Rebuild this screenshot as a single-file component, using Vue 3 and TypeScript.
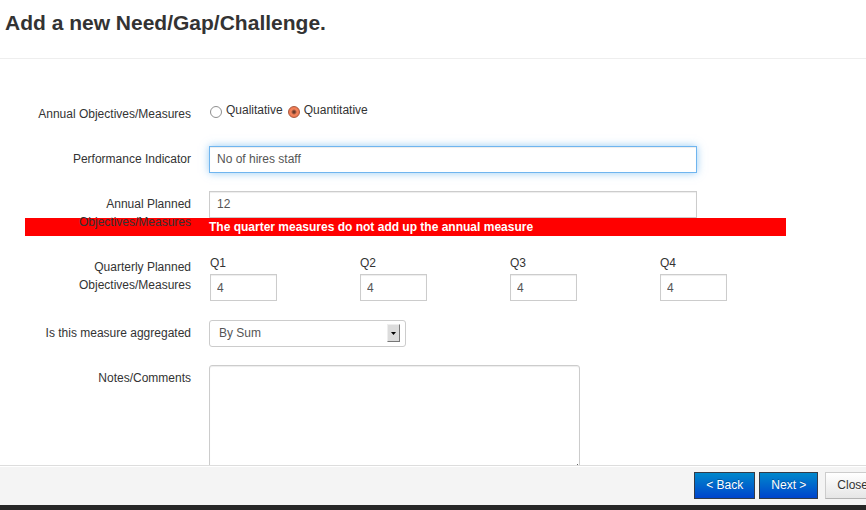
<script setup lang="ts">
import { reactive, ref } from 'vue'

interface Quarter {
  id: string
  label: string
  value: string
}

const kind = ref<'qualitative' | 'quantitative'>('quantitative')
const indicator = ref('No of hires staff')
const annual = ref('12')
const aggregation = ref('sum')
const notes = ref('')
const quarters = reactive<Quarter[]>([
  { id: 'q1', label: 'Q1', value: '4' },
  { id: 'q2', label: 'Q2', value: '4' },
  { id: 'q3', label: 'Q3', value: '4' },
  { id: 'q4', label: 'Q4', value: '4' },
])
</script>

<template>
  <div class="dialog">
    <header class="dialog-header">
      <h1>Add a new Need/Gap/Challenge.</h1>
    </header>

    <main class="dialog-body">
      <form id="need-form" class="form" @submit.prevent>
        <div class="row" role="radiogroup" aria-labelledby="kind-label">
          <span id="kind-label" class="label">Annual Objectives/Measures</span>
          <div class="radios">
            <input id="qualitative" v-model="kind" type="radio" name="kind" value="qualitative" />
            <label for="qualitative">Qualitative</label>
            <input id="quantitative" v-model="kind" type="radio" name="kind" value="quantitative" />
            <label for="quantitative">Quantitative</label>
          </div>
        </div>

        <div class="row">
          <label class="label" for="indicator">Performance Indicator</label>
          <input id="indicator" v-model="indicator" class="field wide active" type="text" />
        </div>

        <div class="group">
          <div class="row">
            <label class="label overhang" for="annual">Annual Planned Objectives/Measures</label>
            <input id="annual" v-model="annual" class="field wide" type="text" />
          </div>
          <p class="error" role="alert">The quarter measures do not add up the annual measure</p>
        </div>

        <div class="row">
          <span class="label">Quarterly Planned Objectives/Measures</span>
          <div class="quarters">
            <div v-for="q in quarters" :key="q.id" class="quarter">
              <label :for="q.id">{{ q.label }}</label>
              <input :id="q.id" v-model="q.value" class="field" type="text" />
            </div>
          </div>
        </div>

        <div class="row">
          <label class="label" for="aggregation">Is this measure aggregated</label>
          <div class="select">
            <select id="aggregation" v-model="aggregation">
              <option value="sum">By Sum</option>
            </select>
            <span class="arrow" aria-hidden="true">
              <svg width="5" height="3" viewBox="0 0 5 3"><path d="M0 0h5L2.5 3z" fill="#000" /></svg>
            </span>
          </div>
        </div>

        <div class="row">
          <label class="label" for="notes">Notes/Comments</label>
          <textarea id="notes" v-model="notes"></textarea>
        </div>
      </form>
    </main>

    <footer class="dialog-footer">
      <button class="btn primary" type="button">&lt; Back</button>
      <button class="btn primary" type="button">Next &gt;</button>
      <button class="btn close" type="button">Close</button>
    </footer>
  </div>
</template>

<style>
body {
  overflow: hidden;
  background: #fff;
}
</style>

<style scoped>
.dialog,
.dialog * {
  box-sizing: border-box;
}

.dialog {
  display: flex;
  flex-direction: column;
  height: 100vh;
  overflow: hidden;
  border-bottom: 5px solid #272727;
  color: #333;
  font: 12px/18px "Liberation Sans", Arial, sans-serif;
}

.dialog-header {
  flex: none;
  padding: 9px 5px 22px;
  border-bottom: 1px solid #eee;
}

h1 {
  margin: 0;
  font-size: 21px;
  line-height: 27px;
}

.dialog-body {
  flex: 1;
  min-height: 0;
  overflow: hidden;
  padding: 42px 80px 0 25px;
}

.form {
  display: flex;
  flex-direction: column;
  gap: 18px;
}

.row {
  display: grid;
  grid-template-columns: 166px 1fr;
  column-gap: 18px;
  align-items: start;
  min-height: 27px;
}

.label {
  padding-top: 4px;
  text-align: right;
}

.overhang {
  position: relative;
  z-index: 1;
  height: 27px;
}

.radios {
  display: flex;
  align-items: center;
  gap: 4px;
  height: 18px;
}

.radios input {
  appearance: none;
  flex: none;
  width: 12px;
  height: 12px;
  margin: 4px 0 0 1px;
  border: 1px solid #8f8f8f;
  border-radius: 50%;
  background: #fff;
}

.radios input:checked {
  border-color: #a8583e;
  background: radial-gradient(circle, #6b3a2a 0 1px, #f4845c 3px, #ee7850 5px);
}

.field {
  width: 100%;
  height: 27px;
  margin: 0;
  padding: 3px 7px 5px;
  border: 1px solid #ccc;
  border-radius: 0;
  background: #fff;
  box-shadow: inset 0 1px 1px rgba(0, 0, 0, 0.075);
  color: #555;
  font: inherit;
}

.wide {
  max-width: 488px;
}

.active,
.field:focus {
  border-color: #6fb5ef;
  outline: 0;
  box-shadow: inset 0 1px 1px rgba(0, 0, 0, 0.075), 0 0 8px rgba(82, 168, 236, 0.6);
}

.error {
  margin: 0;
  padding-left: 184px;
  background: #f00;
  color: #fff;
  font-weight: bold;
}

.quarters {
  display: grid;
  grid-template-columns: repeat(4, 150px);
  padding: 0 0 1px 1px;
}

.quarter {
  display: flex;
  flex-direction: column;
  gap: 2px;
}

.quarter .field {
  width: 67px;
  padding: 4px 6px;
}

.select {
  position: relative;
  width: 197px;
}

select {
  appearance: none;
  display: block;
  width: 100%;
  height: 27px;
  margin: 0;
  padding: 0 24px 2px 9px;
  border: 1px solid #ccc;
  border-radius: 3px;
  background: #fff;
  color: #555;
  font: inherit;
}

.arrow {
  position: absolute;
  top: 4px;
  right: 6px;
  display: flex;
  align-items: center;
  justify-content: center;
  width: 13px;
  height: 18px;
  border: 1px solid;
  border-color: #eee #777 #777 #eee;
  background: #dcdcdc;
  pointer-events: none;
}

textarea {
  width: 371px;
  height: 108px;
  margin: 0;
  padding: 4px;
  border: 1px solid #ccc;
  border-radius: 3px;
  box-shadow: inset 0 1px 1px rgba(0, 0, 0, 0.075);
  color: #555;
  font: inherit;
}

.dialog-footer {
  display: flex;
  flex: none;
  justify-content: flex-end;
  gap: 4px;
  margin-right: -14px;
  padding: 6px 0;
  border-top: 1px solid #ddd;
  background: #f4f4f4;
  box-shadow: inset 0 1px 0 #fff;
}

.btn {
  flex: none;
  height: 27px;
  padding: 0 11px 2px;
  border: 1px solid #ccc;
  border-radius: 0;
  font: inherit;
}

.primary {
  border-color: #333b48;
  background: linear-gradient(#0088cc, #0044cc);
  color: #fff;
  text-shadow: 0 -1px 0 rgba(0, 0, 0, 0.25);
}

.close {
  margin-left: 3px;
  border-color: #ccc #ccc #b3b3b3;
  background: linear-gradient(#fff, #e6e6e6);
  color: #333;
  text-shadow: 0 1px 1px rgba(255, 255, 255, 0.75);
}
</style>
